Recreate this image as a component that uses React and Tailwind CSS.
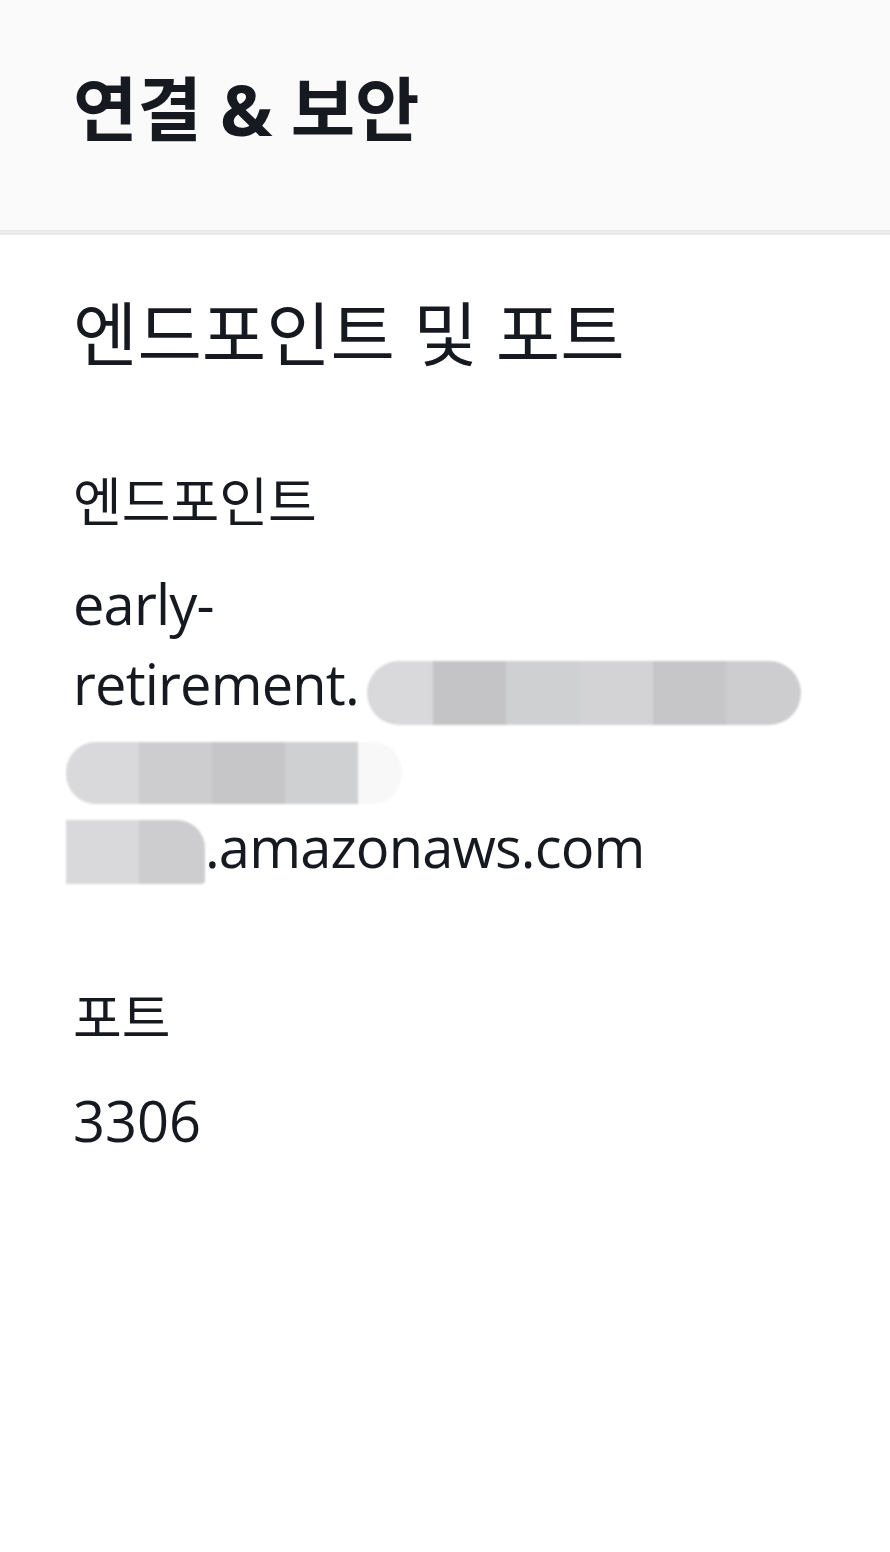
import React from 'react';

const font = "font-['Open_Sans','Noto_Sans_CJK_KR',sans-serif]";

// masked (blurred) part of the endpoint hostname, drawn as mosaic cells
const Mosaic = ({ cells, className }) => (
  <span className={`inline-flex overflow-hidden blur-[1px] ${className}`}>
    {cells.map((c, i) => (
      <span key={i} className="h-full shrink-0" style={{ width: c[0], background: c[1] }} />
    ))}
  </span>
);

const App = () => {
  return (
    <div className={`w-[890px] min-h-[1552px] bg-white text-[#16191f] ${font}`}>
      {/* Container header */}
      <header className="h-[235px] bg-[#fafafa] border-b-[5px] border-[#e9ebed] flex items-center pl-[73px] pb-[12px]">
        <h2 className="text-[70px] leading-none font-bold">연결 &amp; 보안</h2>
      </header>

      <div className="pl-[73px] pt-[64px]">
        <h3 className="text-[70px] leading-none font-normal">엔드포인트 및 포트</h3>

        <div className="mt-[106px]">
          <div className="text-[53px] leading-none">엔드포인트</div>
          <div className="mt-[35px] text-[56px] leading-none tracking-[-0.015em]">
            <div className="h-[80px] flex items-center">early-</div>
            <div className="h-[80px] flex items-center">
              <span>retirement.</span>
              <Mosaic
                className="h-[64px] mt-[20px] ml-[8px] rounded-[32px]"
                cells={[[66, '#d9d9db'], [73, '#c4c4c6'], [74, '#cfd0d2'], [73, '#d3d3d5'], [73, '#c6c6c8'], [75, '#cdcdcf']]}
              />
            </div>
            <div className="h-[80px] flex items-center -ml-[7px]">
              <Mosaic
                className="h-[62px] mt-[20px] rounded-[30px]"
                cells={[[73, '#d9d9db'], [73, '#cdcdcf'], [73, '#c6c6c8'], [73, '#cfd0d2'], [44, '#f8f8f8']]}
              />
            </div>
            <div className="h-[86px] flex items-center -ml-[7px]">
              <Mosaic
                className="h-[64px] mt-[12px] rounded-tr-[28px] rounded-br-[4px]"
                cells={[[73, '#d9d9db'], [66, '#cdcdcf']]}
              />
              <span>.amazonaws.com</span>
            </div>
          </div>
        </div>

        <div className="mt-[102px]">
          <div className="text-[53px] leading-none">포트</div>
          <div className="mt-[48px] text-[56px] leading-none">3306</div>
        </div>
      </div>
    </div>
  );
};

export default App;
